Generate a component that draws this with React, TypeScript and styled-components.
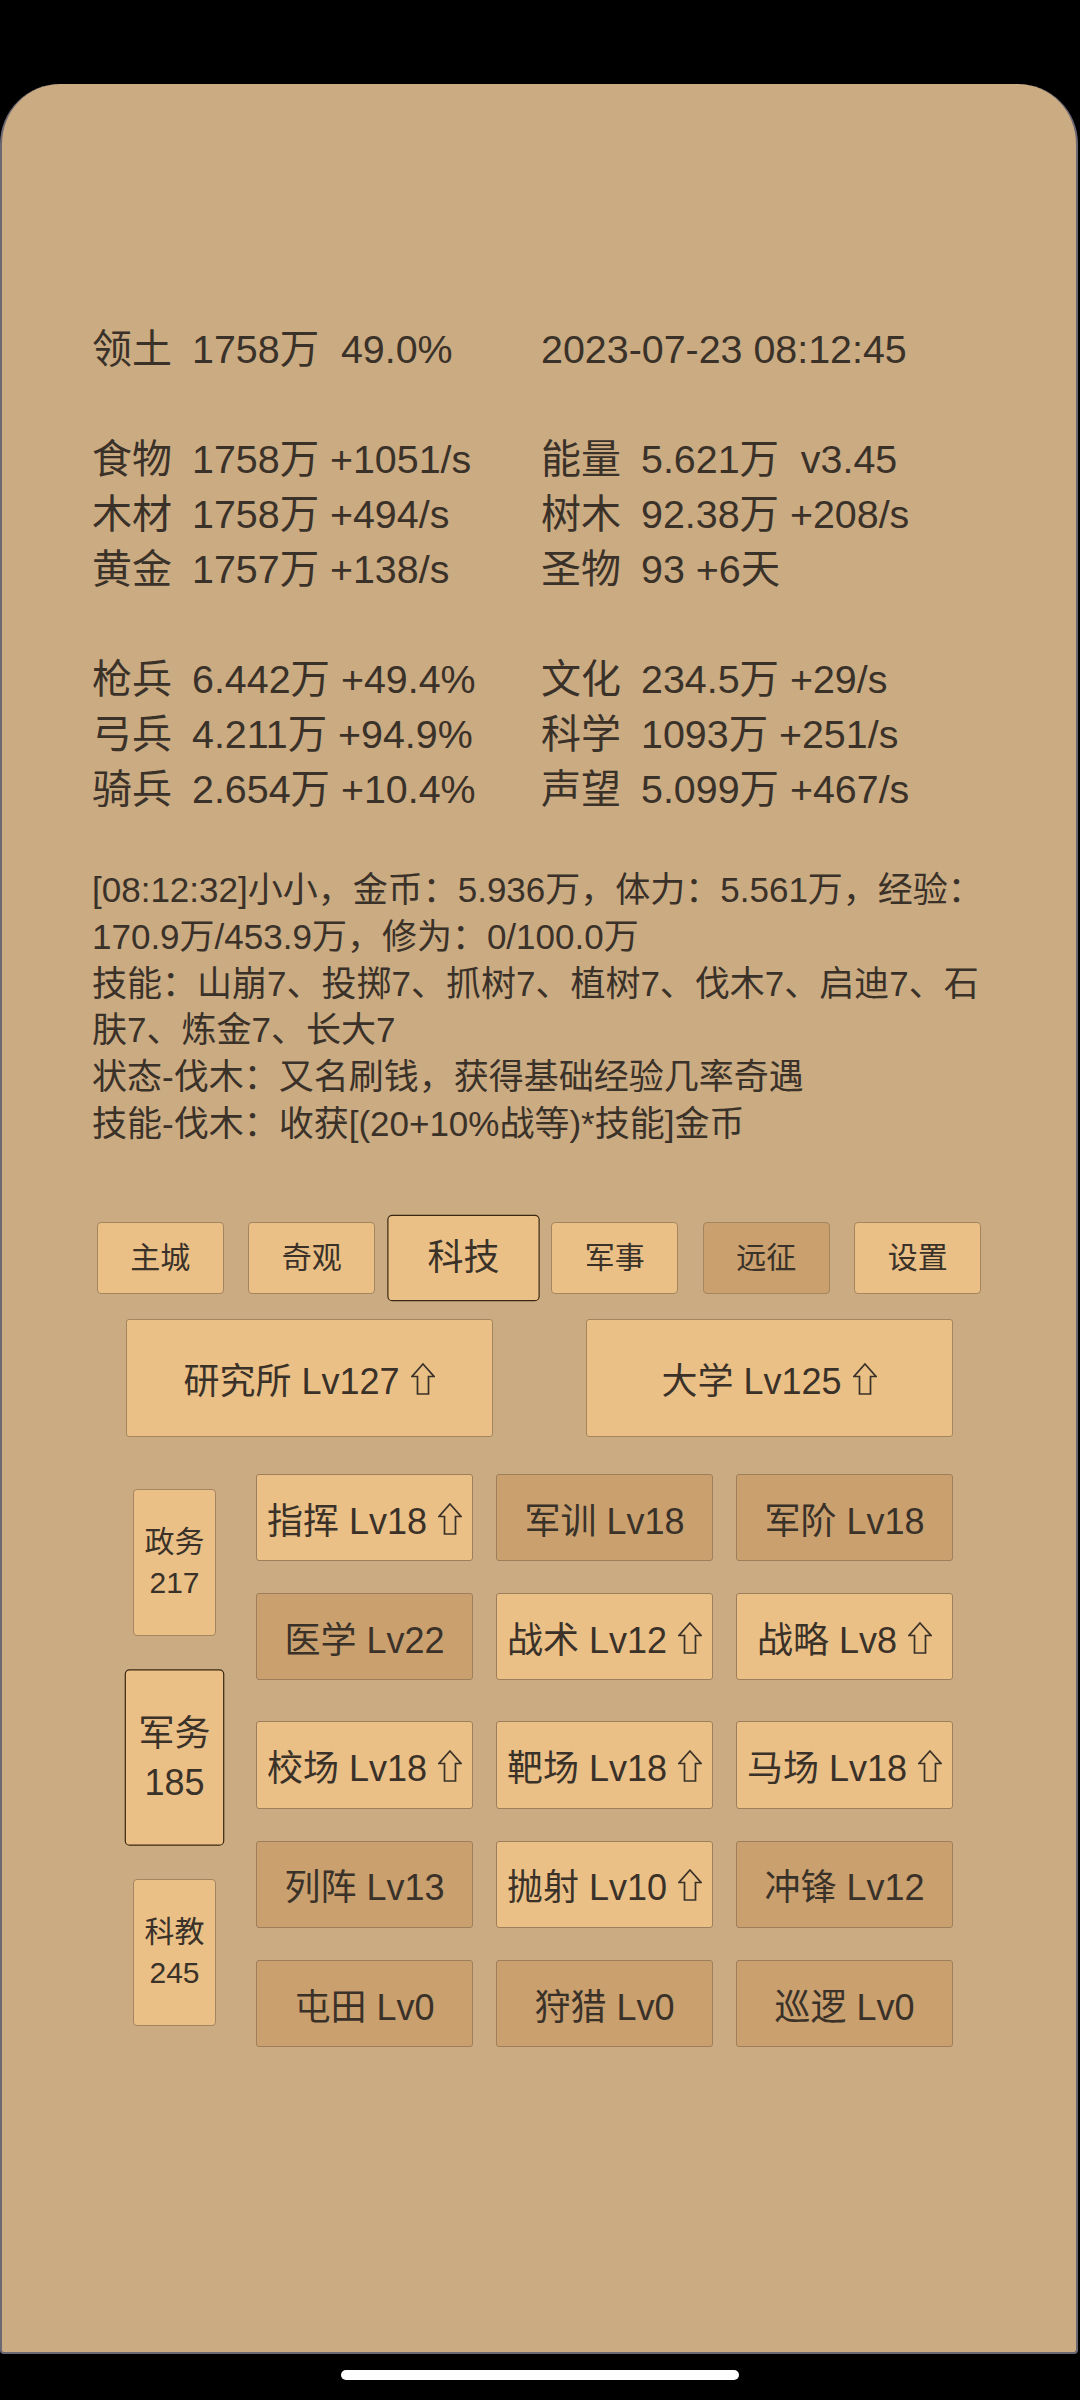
import React from "react";
import styled, { createGlobalStyle } from "styled-components";

const Global = createGlobalStyle`
  html, body { margin: 0; padding: 0; background: #000; }
  body { font-family: "Liberation Sans", "Noto Sans CJK SC", sans-serif; }
`;

const Screen = styled.div`
  width: 1080px;
  height: 2400px;
  background: #000;
  display: flex;
  flex-direction: column;
`;

const StatusArea = styled.div`
  flex: none;
  height: 84px;
`;

const Panel = styled.main`
  flex: none;
  height: 2270px;
  box-sizing: border-box;
  margin-right: 2px;
  background: #caab82;
  border: 2px solid #6c6873;
  border-top: none;
  border-radius: 60px 60px 4px 4px;
  padding-top: 238px;
  color: #3a3129;
  display: flex;
  flex-direction: column;
`;

const Stats = styled.div`
  display: grid;
  grid-template-columns: 449px auto;
  padding-left: 90px;
  font-size: 39.4px;
  line-height: 55px;
`;

const StatLine = styled.div`
  display: flex;
  white-space: pre;
`;

const StatLabel = styled.span`
  flex: none;
  width: 100px;
  font-size: 40px;
`;

const StatBlank = styled.div`
  grid-column: 1 / span 2;
  height: 55px;
`;

const Info = styled.div`
  margin-top: 50px;
  padding-left: 90px;
  width: 912px;
  font-size: 35px;
  line-height: 46.8px;
`;

const InfoPara = styled.p`
  margin: 0;
`;

const Tabs = styled.nav`
  margin-top: 74px;
  display: flex;
  justify-content: center;
  gap: 24.5px;
`;

const Tab = styled.button<{ $active?: boolean; $dim?: boolean }>`
  width: 127px;
  height: 72px;
  box-sizing: border-box;
  padding: 0;
  border-radius: 4px;
  border: 1px solid ${(p) => (p.$active ? "#3a2812" : "#a3855f")};
  background: ${(p) => (p.$dim ? "#c9a06e" : "#eac086")};
  color: #3a3129;
  font-family: inherit;
  font-size: 30px;
  line-height: 40px;
  transform: ${(p) => (p.$active ? "scale(1.2)" : "none")};
`;

const BigRow = styled.div`
  margin-top: 25px;
  display: flex;
  justify-content: center;
  gap: 93px;
`;

const BigButton = styled.button`
  width: 367px;
  height: 118px;
  box-sizing: border-box;
  padding: 0;
  border-radius: 3px;
  border: 1px solid #a3855f;
  background: #eac086;
  color: #3a3129;
  font-family: inherit;
  font-size: 36px;
  display: flex;
  align-items: center;
  justify-content: center;
`;

const Section = styled.div`
  margin-top: 37px;
  padding-left: 131px;
  display: flex;
  gap: 40px;
  align-items: flex-start;
`;

const SideCol = styled.div`
  margin-top: 15px;
  width: 83px;
  display: flex;
  flex-direction: column;
  gap: 48px;
`;

const SideButton = styled.button<{ $active?: boolean }>`
  width: 83px;
  height: 147px;
  box-sizing: border-box;
  padding: 0;
  border-radius: 4px;
  border: 1px solid ${(p) => (p.$active ? "#3a2812" : "#a3855f")};
  background: #eac086;
  color: #3a3129;
  font-family: inherit;
  font-size: 30px;
  line-height: 41px;
  display: flex;
  flex-direction: column;
  align-items: center;
  justify-content: center;
  transform: ${(p) => (p.$active ? "scale(1.2)" : "none")};
`;

const Groups = styled.div`
  display: flex;
  flex-direction: column;
  gap: 41px;
`;

const CellGrid = styled.div`
  display: grid;
  grid-template-columns: repeat(3, 217px);
  column-gap: 23px;
  row-gap: 31.7px;
`;

const Cell = styled.button<{ $dim?: boolean }>`
  height: 87.5px;
  box-sizing: border-box;
  padding: 0;
  border-radius: 3px;
  border: 1px solid #9e7f5b;
  background: ${(p) => (p.$dim ? "#c9a06e" : "#eac086")};
  color: #3a3129;
  font-family: inherit;
  font-size: 36px;
  display: flex;
  align-items: center;
  justify-content: center;
  white-space: nowrap;
`;

const ArrowSvg = styled.svg`
  flex: none;
  width: 24px;
  height: 32px;
  margin-left: 11px;
  margin-top: 2px;
`;

const BottomBar = styled.div`
  flex: 1;
  display: flex;
  justify-content: center;
  padding-top: 16px;
`;

const HomeIndicator = styled.div`
  width: 398px;
  height: 10px;
  border-radius: 5px;
  background: #fff;
`;

const UpArrow = () => (
  <ArrowSvg viewBox="0 0 24 32" aria-hidden="true">
    <path
      d="M12 1 L23 13.5 L17.5 13.5 L17.5 31 L6.5 31 L6.5 13.5 L1 13.5 Z"
      fill="none"
      stroke="#3a3129"
      strokeWidth="1.7"
      strokeLinejoin="miter"
    />
  </ArrowSvg>
);

type Stat = [string, string];
const statRows: (Stat[] | null)[] = [
  [["领土", "1758万  49.0%"], ["", "2023-07-23 08:12:45"]],
  null,
  [["食物", "1758万 +1051/s"], ["能量", "5.621万  v3.45"]],
  [["木材", "1758万 +494/s"], ["树木", "92.38万 +208/s"]],
  [["黄金", "1757万 +138/s"], ["圣物", "93 +6天"]],
  null,
  [["枪兵", "6.442万 +49.4%"], ["文化", "234.5万 +29/s"]],
  [["弓兵", "4.211万 +94.9%"], ["科学", "1093万 +251/s"]],
  [["骑兵", "2.654万 +10.4%"], ["声望", "5.099万 +467/s"]],
];

const tabs = [
  { t: "主城" },
  { t: "奇观" },
  { t: "科技", active: true },
  { t: "军事" },
  { t: "远征", dim: true },
  { t: "设置" },
];

type C = { t: string; up?: boolean; dim?: boolean };
const group1: C[] = [
  { t: "指挥 Lv18", up: true },
  { t: "军训 Lv18", dim: true },
  { t: "军阶 Lv18", dim: true },
  { t: "医学 Lv22", dim: true },
  { t: "战术 Lv12", up: true },
  { t: "战略 Lv8", up: true },
];
const group2: C[] = [
  { t: "校场 Lv18", up: true },
  { t: "靶场 Lv18", up: true },
  { t: "马场 Lv18", up: true },
  { t: "列阵 Lv13", dim: true },
  { t: "抛射 Lv10", up: true },
  { t: "冲锋 Lv12", dim: true },
  { t: "屯田 Lv0", dim: true },
  { t: "狩猎 Lv0", dim: true },
  { t: "巡逻 Lv0", dim: true },
];

const renderCells = (cells: C[]) =>
  cells.map((c) => (
    <Cell key={c.t} $dim={c.dim}>
      <span>{c.t}</span>
      {c.up && <UpArrow />}
    </Cell>
  ));

export default function App() {
  return (
    <>
      <Global />
      <Screen>
        <StatusArea />
        <Panel>
          <Stats>
            {statRows.map((row, i) =>
              row ? (
                row.map(([label, value], j) => (
                  <StatLine key={`${i}-${j}`}>
                    {label && <StatLabel>{label}</StatLabel>}
                    <span>{value}</span>
                  </StatLine>
                ))
              ) : (
                <StatBlank key={`b${i}`} />
              )
            )}
          </Stats>
          <Info>
            <InfoPara>[08:12:32]小小，金币：5.936万，体力：5.561万，经验：170.9万/453.9万，修为：0/100.0万</InfoPara>
            <InfoPara>技能：山崩7、投掷7、抓树7、植树7、伐木7、启迪7、石肤7、炼金7、长大7</InfoPara>
            <InfoPara>状态-伐木：又名刷钱，获得基础经验几率奇遇</InfoPara>
            <InfoPara>技能-伐木：收获[(20+10%战等)*技能]金币</InfoPara>
          </Info>
          <Tabs>
            {tabs.map((t) => (
              <Tab key={t.t} $active={t.active} $dim={t.dim}>
                {t.t}
              </Tab>
            ))}
          </Tabs>
          <BigRow>
            <BigButton>
              <span>研究所 Lv127</span>
              <UpArrow />
            </BigButton>
            <BigButton>
              <span>大学 Lv125</span>
              <UpArrow />
            </BigButton>
          </BigRow>
          <Section>
            <SideCol>
              <SideButton>
                <span>政务</span>
                <span>217</span>
              </SideButton>
              <SideButton $active>
                <span>军务</span>
                <span>185</span>
              </SideButton>
              <SideButton>
                <span>科教</span>
                <span>245</span>
              </SideButton>
            </SideCol>
            <Groups>
              <CellGrid>{renderCells(group1)}</CellGrid>
              <CellGrid>{renderCells(group2)}</CellGrid>
            </Groups>
          </Section>
        </Panel>
        <BottomBar>
          <HomeIndicator />
        </BottomBar>
      </Screen>
    </>
  );
}
